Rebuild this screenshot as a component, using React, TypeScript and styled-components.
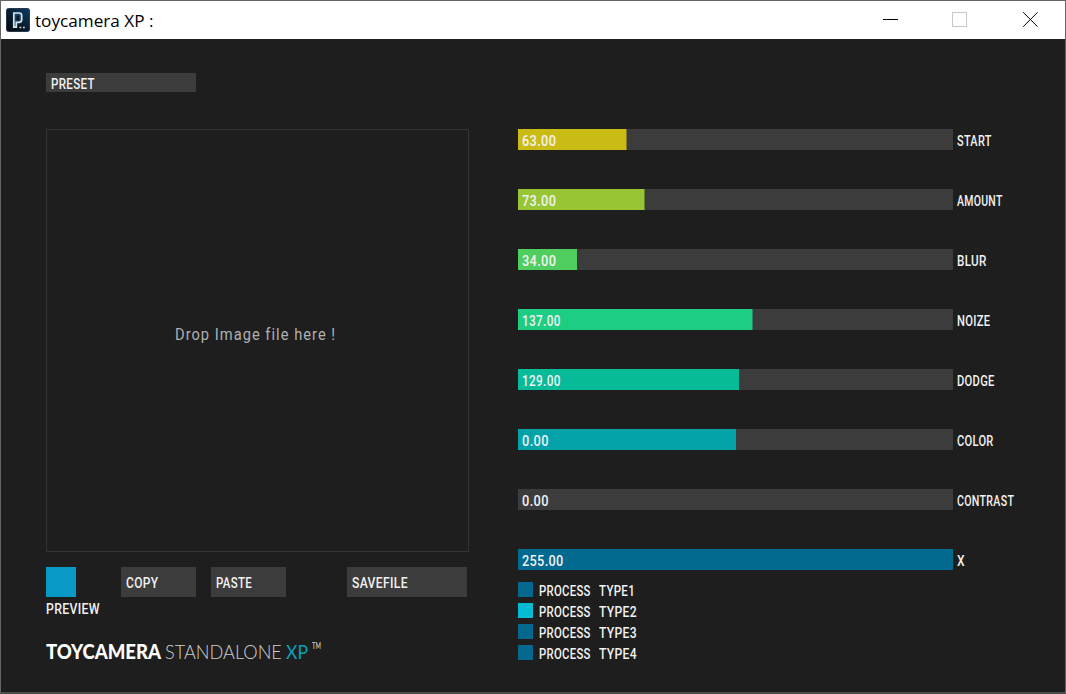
import { useLayoutEffect, useRef, useState } from "react";
import styled, { createGlobalStyle } from "styled-components";

const Global = createGlobalStyle`
  * { box-sizing: border-box; }
  body { margin: 0; background: #1e1e1e; overflow: hidden; }
`;

const Window = styled.div`
  width: 1066px;
  height: 694px;
  display: flex;
  flex-direction: column;
  background: #1e1e1e;
  border: 1px solid #656565;
  border-bottom-width: 2px;
  border-bottom-color: #4c4c4c;
  font-family: Roboto, "Liberation Sans", sans-serif;
`;

const TitleBar = styled.header`
  height: 38px;
  flex: none;
  display: flex;
  align-items: center;
  padding-left: 5px;
  background: #fff;
  color: #000;
`;

const AppIcon = styled.svg`
  display: block;
  margin: -1px 5px 0 0;
  flex: none;
`;

const WindowControls = styled.div`
  margin-left: auto;
  display: flex;
  gap: 54px;
  padding: 0 26px 2px 0;
  svg { display: block; }
`;

const Content = styled.main`
  flex: 1;
  display: flex;
  padding: 34px 0 0 45px;
`;

const LeftColumn = styled.section`
  width: 423px;
  margin-right: 49px;
  flex: none;
`;

const RightColumn = styled.section`
  padding-top: 56px;
`;

const Button = styled.div<{ $w: number; $h: number }>`
  width: ${(p) => p.$w}px;
  height: ${(p) => p.$h}px;
  display: flex;
  align-items: center;
  padding-left: 5px;
  padding-top: 2px;
  background: #3c3c3c;
`;

const DropZone = styled.div`
  width: 423px;
  height: 423px;
  margin-top: 37px;
  padding-right: 4px;
  padding-bottom: 12px;
  border: 1px solid #343434;
  display: flex;
  align-items: center;
  justify-content: center;
`;

const Actions = styled.div`
  display: flex;
  margin-top: 15px;
`;

const Preview = styled.div`
  width: 75px;
  height: 30px;
`;

const PreviewSwatch = styled.div`
  width: 30px;
  height: 30px;
  margin-bottom: 4px;
  background: #0899c7;
`;

const Spacer = styled.div<{ $w: number }>`
  width: ${(p) => p.$w}px;
`;

const Logo = styled.div`
  display: flex;
  margin-top: 43px;
  gap: 4px;
  align-items: flex-start;
`;

const SliderRow = styled.div`
  height: 21px;
  margin-bottom: 39px;
  display: flex;
  align-items: center;
  gap: 4px;
`;

const Track = styled.div<{ $fill: number; $color: string }>`
  width: 435px;
  height: 21px;
  padding: 3px 0 0 4px;
  display: flex;
  align-items: center;
  background: linear-gradient(${(p) => p.$color}, ${(p) => p.$color}) 0 0 / ${(p) => p.$fill}px 100% no-repeat #3c3c3c;
`;

const LabelSlot = styled.div`
  padding-top: 3px;
`;

const TypeList = styled.div`
  display: flex;
  flex-direction: column;
  gap: 6px;
  margin-top: -27px;
`;

const TypeRow = styled.div`
  height: 15px;
  display: flex;
  align-items: center;
`;

const Swatch = styled.div<{ $color: string }>`
  width: 15px;
  height: 15px;
  margin-right: 6px;
  background: ${(p) => p.$color};
`;

const FitBox = styled.span<{
  $w: number;
  $size: number;
  $color: string;
  $weight: number;
  $font: string;
  $shift: number;
  $spacing: number;
}>`
  display: block;
  width: ${(p) => p.$w}px;
  height: ${(p) => p.$size + 2}px;
  margin-top: ${(p) => p.$shift}px;
  line-height: ${(p) => p.$size + 2}px;
  font-family: ${(p) => p.$font};
  font-size: ${(p) => p.$size}px;
  font-weight: ${(p) => p.$weight};
  letter-spacing: ${(p) => p.$spacing}px;
  color: ${(p) => p.$color};
  white-space: pre;
`;

const FitInner = styled.span`
  display: inline-block;
  transform-origin: 0 50%;
`;

type FitProps = {
  children: string;
  w: number;
  size?: number;
  color?: string;
  weight?: number;
  font?: string;
  shift?: number;
  spacing?: number;
};

/* Text condensed or stretched horizontally to an exact width. */
function Fit({
  children,
  w,
  size = 15,
  color = "#f2f2f2",
  weight = 500,
  font = 'Roboto, "Liberation Sans", sans-serif',
  shift = 0,
  spacing = 0.4,
}: FitProps) {
  const ref = useRef<HTMLSpanElement>(null);
  const [scale, setScale] = useState(1);
  useLayoutEffect(() => {
    if (ref.current) setScale(w / ref.current.offsetWidth);
  }, [w, children]);
  return (
    <FitBox $w={w} $size={size} $color={color} $weight={weight} $font={font} $shift={shift} $spacing={spacing}>
      <FitInner ref={ref} style={{ transform: `scaleX(${scale})` }}>
        {children}
      </FitInner>
    </FitBox>
  );
}

const sliders = [
  { name: "START", nameW: 35, value: "63.00", valueW: 34, fill: 108.5, color: "#cbbc15" },
  { name: "AMOUNT", nameW: 45.5, value: "73.00", valueW: 34, fill: 126.5, color: "#98c534" },
  { name: "BLUR", nameW: 29.5, value: "34.00", valueW: 34, fill: 59, color: "#50cd5f" },
  { name: "NOIZE", nameW: 33.5, value: "137.00", valueW: 38.5, fill: 234.5, color: "#1dcd83" },
  { name: "DODGE", nameW: 38, value: "129.00", valueW: 38.5, fill: 221, color: "#07bb98" },
  { name: "COLOR", nameW: 37, value: "0.00", valueW: 26.5, fill: 218, color: "#02a2a8" },
  { name: "CONTRAST", nameW: 57.5, value: "0.00", valueW: 26.5, fill: 0, color: "#02698f" },
  { name: "X", nameW: 8, value: "255.00", valueW: 41.5, fill: 435, color: "#02698f" },
];

const types = [
  { n: "TYPE1", w: 36, color: "#04688e" },
  { n: "TYPE2", w: 38, color: "#05bad2" },
  { n: "TYPE3", w: 38, color: "#04688e" },
  { n: "TYPE4", w: 38, color: "#04688e" },
];

const lato = 'Lato, "Open Sans", sans-serif';

export default function App() {
  return (
    <>
      <Global />
      <Window>
        <TitleBar>
          <AppIcon width="24" height="24" viewBox="0 0 24 24">
            <defs>
              <linearGradient id="tile" x1="1" y1="0" x2="0.2" y2="1">
                <stop offset="0" stopColor="#0c3c66" />
                <stop offset="0.5" stopColor="#0a2037" />
                <stop offset="1" stopColor="#050b14" />
              </linearGradient>
            </defs>
            <rect x="0.5" y="0.5" width="23" height="23" rx="2" fill="url(#tile)" stroke="#26394c" />
            <path
              d="M7.8 19.2V5H13.2Q15.7 5 15.7 7.5V11.8Q15.7 14.3 13.2 14.3H10.3V19.2Z"
              fill="#16415f"
              stroke="#cfe6f0"
              strokeWidth="1.7"
            />
            <path d="M11.8 7.8V12" stroke="#071523" strokeWidth="2.4" />
            <path d="M13.5 19.5h1.8M17 19.5h1.8" stroke="#e2dbb0" strokeWidth="1.6" />
          </AppIcon>
          <Fit w={118} size={17} weight={400} color="#000" font={'"Open Sans", sans-serif'} spacing={0}>
            toycamera XP :
          </Fit>
          <WindowControls>
            <svg width="15" height="15" viewBox="0 0 15 15" overflow="visible">
              <path d="M-1 7.5H14" stroke="#000" />
            </svg>
            <svg width="15" height="15" viewBox="0 0 15 15" overflow="visible">
              <rect x="-0.5" y="0.5" width="14" height="14" fill="none" stroke="#c8c8c8" />
            </svg>
            <svg width="17" height="15" viewBox="0 0 17 15">
              <path d="M1.2 0.3L15.6 14.7M15.6 0.3L1.2 14.7" stroke="#000" strokeWidth="1" />
            </svg>
          </WindowControls>
        </TitleBar>
        <Content>
          <LeftColumn>
            <Button $w={150} $h={19}><Fit w={44} shift={1}>PRESET</Fit></Button>
            <DropZone>
              <Fit w={161} size={17} weight={400} color="#b0b0b0" spacing={1.2}>
                Drop Image file here !
              </Fit>
            </DropZone>
            <Actions>
              <Preview>
                <PreviewSwatch />
                <Fit w={54}>PREVIEW</Fit>
              </Preview>
              <Button $w={75} $h={30}><Fit w={32}>COPY</Fit></Button>
              <Spacer $w={15} />
              <Button $w={75} $h={30}><Fit w={36}>PASTE</Fit></Button>
              <Spacer $w={61} />
              <Button $w={120} $h={30}><Fit w={56}>SAVEFILE</Fit></Button>
            </Actions>
            <Logo>
              <Fit w={115} size={20} weight={900} color="#fff" font={lato} spacing={0}>TOYCAMERA</Fit>
              <Fit w={117} size={20} weight={300} color="#cfcfcf" font={lato} spacing={0}>STANDALONE</Fit>
              <Fit w={22} size={20} weight={400} color="#08a0b4" font={lato} spacing={0}>XP</Fit>
              <Fit w={9} size={9} weight={700} color="#b8b8b8" font={lato} spacing={0}>TM</Fit>
            </Logo>
          </LeftColumn>
          <RightColumn>
            {sliders.map((s) => (
              <SliderRow key={s.name}>
                <Track $fill={s.fill} $color={s.color}>
                  <Fit w={s.valueW}>{s.value}</Fit>
                </Track>
                <LabelSlot><Fit w={s.nameW}>{s.name}</Fit></LabelSlot>
              </SliderRow>
            ))}
            <TypeList>
              {types.map((t) => (
                <TypeRow key={t.n}>
                  <Swatch $color={t.color} />
                  <Fit w={52} shift={3}>PROCESS</Fit>
                  <Spacer $w={8} />
                  <Fit w={t.w} shift={3}>{t.n}</Fit>
                </TypeRow>
              ))}
            </TypeList>
          </RightColumn>
        </Content>
      </Window>
    </>
  );
}
